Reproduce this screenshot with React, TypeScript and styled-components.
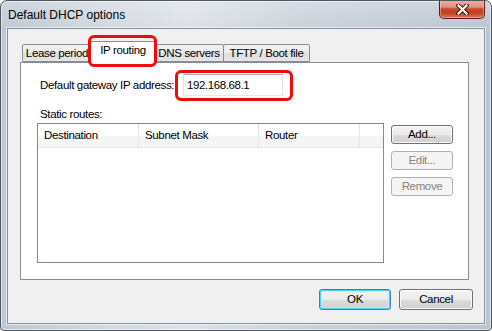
import React from "react";
import styled, { createGlobalStyle } from "styled-components";

const GlobalStyle = createGlobalStyle`
  html, body {
    margin: 0;
    padding: 0;
    background: #ffffff;
  }
  body {
    font-family: "Liberation Sans", Arial, sans-serif;
    font-size: 11.5px;
    color: #000;
  }
`;

/**
 * window frame
 */
const Window = styled.div`
  position: relative;
  box-sizing: border-box;
  width: 492px;
  height: 331px;
  border: 1px solid #4f5761;
  border-radius: 7px 7px 4px 4px;
  background: linear-gradient(
      to bottom,
      rgba(255, 255, 255, 0.25) 0px,
      rgba(255, 255, 255, 0) 28px
    ),
    linear-gradient(
      to right,
      #bfc8d2 0%,
      #d2d9e0 22%,
      #dde2e8 38%,
      #c9d1da 62%,
      #c2cbd5 82%,
      #bcc6d1 100%
    );
  box-shadow: inset 0 0 0 1px rgba(255, 255, 255, 0.55);
  overflow: hidden;
`;

const TitleBar = styled.div`
  display: flex;
  justify-content: space-between;
  align-items: flex-start;
  height: 27px;
`;

const Title = styled.div`
  margin: 7px 0 0 7px;
  font-family: "Liberation Sans", Arial, sans-serif;
  font-size: 12px;
  line-height: 14px;
  color: #000;
`;

const CloseButton = styled.div`
  display: flex;
  align-items: center;
  justify-content: center;
  box-sizing: border-box;
  width: 46px;
  height: 19px;
  margin: -1px 6px 0 0;
  border: 1px solid #5a1d12;
  border-top: none;
  border-radius: 0 0 5px 5px;
  background: linear-gradient(
    to bottom,
    #eab1a4 0%,
    #dd8f7c 40%,
    #c6452a 50%,
    #c3401f 72%,
    #d9775e 100%
  );
  box-shadow: inset 0 0 0 1px rgba(255, 220, 210, 0.45);
`;

const Client = styled.div`
  box-sizing: border-box;
  width: 478px;
  height: 296px;
  margin-left: 6px;
  border: 1px solid #8591a0;
  background: #f0f0f0;
  box-shadow: 0 0 0 1px rgba(255, 255, 255, 0.6);
  display: flex;
  flex-direction: column;
`;

/**
 * tab control
 */
const TabControl = styled.div`
  margin: 13px 0 0 12px;
  width: 449px;
`;

const TabStrip = styled.div`
  display: flex;
  align-items: flex-end;
  height: 20px;
  padding-left: 2px;
  position: relative;
  z-index: 1;
`;

const Tab = styled.div<{ $selected?: boolean; $w: number; $ml?: number }>`
  position: relative;
  box-sizing: border-box;
  width: ${({ $w }) => $w}px;
  height: ${({ $selected }) => ($selected ? 22 : 18)}px;
  margin-left: ${({ $ml }) => $ml ?? 0}px;
  margin-bottom: ${({ $selected }) => ($selected ? -1 : 0)}px;
  padding-top: 2px;
  border: 1px solid #898c95;
  border-bottom: ${({ $selected }) => ($selected ? "none" : "1px solid #898c95")};
  border-radius: 2px 2px 0 0;
  background: ${({ $selected }) =>
    $selected
      ? "#ffffff"
      : "linear-gradient(to bottom, #f3f3f3 0%, #ebebeb 50%, #dedede 51%, #e5e5e5 100%)"};
  z-index: ${({ $selected }) => ($selected ? 2 : 1)};
  text-align: center;
  line-height: 13px;
  letter-spacing: -0.35px;
  white-space: nowrap;
`;

const Panel = styled.div`
  box-sizing: border-box;
  height: 218px;
  border: 1px solid #898c95;
  background: #ffffff;
  padding-top: 11px;
`;

/**
 * red annotation boxes
 */
const Highlight = styled.span<{ $t: number; $r: number; $b: number; $l: number }>`
  position: absolute;
  top: ${({ $t }) => $t}px;
  right: ${({ $r }) => $r}px;
  bottom: ${({ $b }) => $b}px;
  left: ${({ $l }) => $l}px;
  border: 3px solid #ee0b0b;
  border-radius: 6px;
  pointer-events: none;
  z-index: 5;
`;

/**
 * fields
 */
const FieldRow = styled.div`
  display: flex;
  align-items: center;
  margin-left: 19px;
  height: 22px;
`;

const Label = styled.span<{ $w?: number }>`
  display: inline-block;
  width: ${({ $w }) => ($w ? `${$w}px` : "auto")};
  letter-spacing: -0.35px;
  line-height: 14px;
  white-space: nowrap;
`;

const InputWrap = styled.span`
  position: relative;
  display: inline-block;
`;

const TextBox = styled.div`
  box-sizing: border-box;
  width: 100px;
  height: 22px;
  border: 1px solid #e2e3ea;
  border-top-color: #abadb3;
  border-bottom-color: #e3e9ef;
  background: #fff;
  padding: 3px 0 0 3px;
  line-height: 14px;
  letter-spacing: -0.4px;
`;

const SectionLabel = styled(Label)`
  display: block;
  margin: 11px 0 0 19px;
`;

/**
 * list view
 */
const ListRow = styled.div`
  display: flex;
  gap: 7px;
  margin: 2px 0 0 16px;
`;

const ListView = styled.div`
  box-sizing: border-box;
  width: 347px;
  height: 140px;
  border: 1px solid #828790;
  background: #fff;
`;

const Header = styled.div`
  display: flex;
  height: 23px;
  border-bottom: 1px solid #e5e5e5;
  background: linear-gradient(to bottom, #ffffff 0%, #ffffff 50%, #f4f5f7 51%, #f4f5f7 100%);
`;

const HeaderCell = styled.div<{ $w: number }>`
  box-sizing: border-box;
  width: ${({ $w }) => $w}px;
  flex: none;
  padding: 5px 0 0 6px;
  border-right: 1px solid #e3e5e8;
  line-height: 13px;
  letter-spacing: -0.35px;
  white-space: nowrap;
`;

const ButtonColumn = styled.div`
  display: flex;
  flex-direction: column;
  gap: 7px;
  padding-top: 2px;
`;

const Button = styled.div<{ $w: number; $h: number; $disabled?: boolean; $default?: boolean }>`
  box-sizing: border-box;
  width: ${({ $w }) => $w}px;
  height: ${({ $h }) => $h}px;
  display: flex;
  align-items: center;
  justify-content: center;
  border: 1px solid
    ${({ $disabled, $default }) =>
      $disabled ? "#adb2b5" : $default ? "#3c7fb1" : "#707070"};
  border-radius: 3px;
  background: ${({ $disabled }) =>
    $disabled
      ? "#f4f4f4"
      : "linear-gradient(to bottom, #f2f2f2 0%, #ebebeb 50%, #dddddd 51%, #cfcfcf 100%)"};
  box-shadow: ${({ $disabled, $default }) =>
    $disabled
      ? "none"
      : $default
      ? "inset 0 0 0 1px #4fd0f9, inset 0 0 0 2px rgba(190, 235, 252, 0.7)"
      : "inset 0 0 0 1px rgba(255, 255, 255, 0.85)"};
  color: ${({ $disabled }) => ($disabled ? "#838383" : "#000")};
  letter-spacing: -0.35px;
  line-height: 13px;
`;

const Footer = styled.div`
  display: flex;
  justify-content: flex-end;
  gap: 8px;
  margin-top: 9px;
  padding-right: 11px;
`;

function CloseGlyph() {
  return (
    <svg width="13" height="11" viewBox="0 0 13 11">
      <path
        d="M2.5 1.5 L10.5 9.5 M10.5 1.5 L2.5 9.5"
        stroke="#3d1710"
        strokeWidth="4.2"
        strokeLinecap="square"
        fill="none"
      />
      <path
        d="M2.5 1.5 L10.5 9.5 M10.5 1.5 L2.5 9.5"
        stroke="#ffffff"
        strokeWidth="2.2"
        strokeLinecap="square"
        fill="none"
      />
    </svg>
  );
}

export default function App() {
  return (
    <>
      <GlobalStyle />
      <Window>
        <TitleBar>
          <Title>Default DHCP options</Title>
          <CloseButton>
            <CloseGlyph />
          </CloseButton>
        </TitleBar>
        <Client>
          <TabControl>
            <TabStrip>
              <Tab $w={70}>Lease period</Tab>
              <Tab $w={66} $ml={-2} $selected>
                IP routing
                <Highlight $t={-7} $r={-2} $b={-4} $l={-3} />
              </Tab>
              <Tab $w={70} $ml={-2}>DNS servers</Tab>
              <Tab $w={87} $ml={-1}>TFTP / Boot file</Tab>
            </TabStrip>
            <Panel>
              <FieldRow>
                <Label $w={143}>Default gateway IP address:</Label>
                <InputWrap>
                  <TextBox>192.168.68.1</TextBox>
                  <Highlight $t={-4} $r={-10} $b={-5} $l={-8} />
                </InputWrap>
              </FieldRow>
              <SectionLabel>Static routes:</SectionLabel>
              <ListRow>
                <ListView>
                  <Header>
                    <HeaderCell $w={101}>Destination</HeaderCell>
                    <HeaderCell $w={120}>Subnet Mask</HeaderCell>
                    <HeaderCell $w={101}>Router</HeaderCell>
                  </Header>
                </ListView>
                <ButtonColumn>
                  <Button $w={62} $h={19}>Add...</Button>
                  <Button $w={62} $h={19} $disabled>
                    Edit...
                  </Button>
                  <Button $w={62} $h={19} $disabled>
                    Remove
                  </Button>
                </ButtonColumn>
              </ListRow>
            </Panel>
          </TabControl>
          <Footer>
            <Button $w={72} $h={21} $default>
              OK
            </Button>
            <Button $w={74} $h={21}>Cancel</Button>
          </Footer>
        </Client>
      </Window>
    </>
  );
}
